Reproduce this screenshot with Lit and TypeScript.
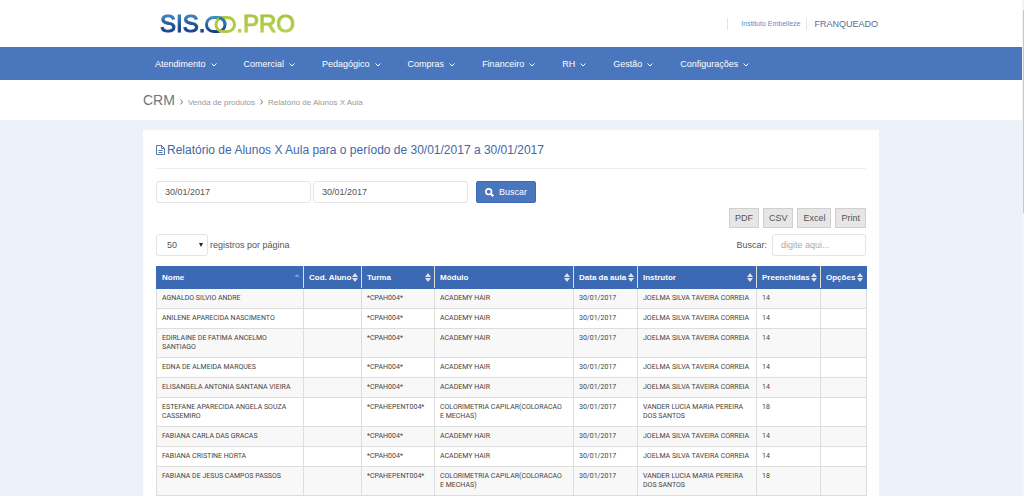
import { LitElement, html, css } from "lit";
import { customElement, property } from "lit/decorators.js";

interface Aula {
  nome: string;
  turma: string;
  modulo: string;
  instrutor: string;
  preenchidas: number;
}

const JOELMA = "JOELMA SILVA TAVEIRA CORREIA";
const VANDER = "VANDER LUCIA MARIA PEREIRA DOS SANTOS";
const COLOR = "COLORIMETRIA CAPILAR(COLORACAO E MECHAS)";

const hair = (nome: string): Aula => ({
  nome,
  turma: "*CPAH004*",
  modulo: "ACADEMY HAIR",
  instrutor: JOELMA,
  preenchidas: 14,
});
const color = (nome: string): Aula => ({
  nome,
  turma: "*CPAHEPENT004*",
  modulo: COLOR,
  instrutor: VANDER,
  preenchidas: 18,
});

const AULAS: Aula[] = [
  hair("AGNALDO SILVIO ANDRE"),
  hair("ANILENE APARECIDA NASCIMENTO"),
  hair("EDIRLAINE DE FATIMA ANCELMO SANTIAGO"),
  hair("EDNA DE ALMEIDA MARQUES"),
  hair("ELISANGELA ANTONIA SANTANA VIEIRA"),
  color("ESTEFANE APARECIDA ANGELA SOUZA CASSEMIRO"),
  hair("FABIANA CARLA DAS GRACAS"),
  hair("FABIANA CRISTINE HORTA"),
  color("FABIANA DE JESUS CAMPOS PASSOS"),
];

const MENU = [
  "Atendimento",
  "Comercial",
  "Pedagógico",
  "Compras",
  "Financeiro",
  "RH",
  "Gestão",
  "Configurações",
];

const COLUNAS = [
  { titulo: "Nome", classe: "c-nome" },
  { titulo: "Cod. Aluno", classe: "c-cod" },
  { titulo: "Turma", classe: "c-turma" },
  { titulo: "Módulo", classe: "c-modulo" },
  { titulo: "Data da aula", classe: "c-data" },
  { titulo: "Instrutor", classe: "c-instrutor" },
  { titulo: "Preenchidas", classe: "c-preench" },
  { titulo: "Opções", classe: "c-opcoes" },
];

@customElement("app-logo")
export class AppLogo extends LitElement {
  static styles = css`
    :host {
      display: flex;
      align-items: center;
      font: 24px/20px "Liberation Sans", Arial, sans-serif;
    }
    .blue {
      color: transparent;
      background: linear-gradient(#3f8fc6, #1d4a90 60%, #173f83);
      background-clip: text;
      -webkit-text-stroke: 1px #1f5fa044;
    }
    .green {
      color: transparent;
      background: linear-gradient(#a3c33c, #bfd455);
      background-clip: text;
      -webkit-text-stroke: 1px #b0c94655;
    }
    svg {
      display: block;
      flex: none;
    }
  `;
  render() {
    return html`
      <span class="blue">SIS.</span>
      <svg width="31" height="20" viewBox="0 0 31 20" fill="none" stroke-width="3" aria-hidden="true">
        <defs>
          <linearGradient id="b" x1="0" y1="0" x2="0" y2="1">
            <stop offset="0" stop-color="#3f8fc6" />
            <stop offset="1" stop-color="#173f83" />
          </linearGradient>
        </defs>
        <rect x="1.5" y="3.5" width="18.500" height="14" rx="7" stroke="url(#b)" />
        <rect x="11" y="3.5" width="18.500" height="14" rx="7" stroke="#b0ca45" />
        <path d="M14 3.700C17.500 4.200 20 7 20 10.500" stroke="#2f74b0" />
      </svg>
      <span class="green">.PRO</span>
    `;
  }
}

@customElement("app-nav")
export class AppNav extends LitElement {
  static styles = css`
    :host {
      display: block;
      padding-top: 2px;
      background: #4a76be;
      font: 9px/31px "Liberation Sans", Arial, sans-serif;
    }
    nav {
      display: flex;
      gap: 27px;
      max-width: 736px;
      margin: 0 auto;
      padding: 0 12px;
      box-sizing: border-box;
    }
    a {
      display: flex;
      align-items: center;
      gap: 5px;
      color: #fff;
      text-decoration: none;
      white-space: nowrap;
    }
  `;
  render() {
    return html`<nav>
      ${MENU.map(
        (m) => html`<a href="#"
          >${m}<svg width="6" height="4" viewBox="0 0 6 4" fill="none" stroke="#fff" aria-hidden="true">
            <path d="M.5.5 3 3 5.500.5" /></svg
        ></a>`
      )}
    </nav>`;
  }
}

@customElement("aulas-table")
export class AulasTable extends LitElement {
  @property({ attribute: false }) rows: Aula[] = [];

  static styles = css`
    :host {
      display: block;
    }
    table {
      width: 100%;
      table-layout: fixed;
      border-collapse: collapse;
      color: #444;
      font: 7px/9px Roboto, "Liberation Sans", sans-serif;
    }
    th,
    td {
      border: 1px solid #ddd;
      padding: 5px 4px 5px 5px;
      text-align: left;
      vertical-align: top;
    }
    td.modulo {
      padding-right: 8px;
    }
    th {
      background: #3b69b3;
      border-top-color: #3b69b3;
      border-bottom-color: #3b69b3;
      color: #fff;
      font: bold 8px/11px "Liberation Sans", Arial, sans-serif;
      white-space: nowrap;
      padding-right: 3px;
    }
    th:first-child {
      border-left-color: #3b69b3;
    }
    th:last-child {
      border-right-color: #3b69b3;
    }
    .head {
      display: flex;
      align-items: center;
      justify-content: space-between;
    }
    .head svg {
      flex: none;
    }
    tbody tr:nth-child(odd) {
      background: #f8f8f8;
    }
    .c-nome {
      width: 147px;
    }
    .c-cod {
      width: 58px;
    }
    .c-turma {
      width: 73px;
    }
    .c-modulo {
      width: 139px;
    }
    .c-data {
      width: 64px;
    }
    .c-instrutor {
      width: 119px;
    }
    .c-preench {
      width: 64px;
    }
    .c-opcoes {
      width: 46px;
    }
  `;

  render() {
    return html`<table>
      <colgroup>
        ${COLUNAS.map((c) => html`<col class=${c.classe} />`)}
      </colgroup>
      <thead>
        <tr>
          ${COLUNAS.map(
            (c, i) => html`<th scope="col">
              <div class="head">
                ${c.titulo}
                ${i === 0
                  ? html`<svg width="6" height="9" viewBox="0 0 6 9" aria-hidden="true">
                      <path d="M3 1 5.500 4H.5z" fill="#7f9fe0" />
                    </svg>`
                  : html`<svg width="6" height="9" viewBox="0 0 6 9" aria-hidden="true">
                      <path d="M3 0 6 4H0zM0 5h6L3 9z" fill="#dbe5f5" />
                    </svg>`}
              </div>
            </th>`
          )}
        </tr>
      </thead>
      <tbody>
        ${this.rows.map(
          (r) => html`<tr>
            <td>${r.nome}</td>
            <td></td>
            <td>${r.turma}</td>
            <td class="modulo">${r.modulo}</td>
            <td>30/01/2017</td>
            <td>${r.instrutor}</td>
            <td>${r.preenchidas}</td>
            <td></td>
          </tr>`
        )}
      </tbody>
    </table>`;
  }
}

@customElement("app-root")
export class AppRoot extends LitElement {
  static styles = css`
    :host {
      display: grid;
      grid-template-columns: minmax(0, 1fr) 2px;
      min-height: 100vh;
      background: #edf1fa;
      color: #555;
      font: 9px/12px "Liberation Sans", Arial, sans-serif;
    }
    * {
      box-sizing: border-box;
    }
    .page {
      display: flex;
      flex-direction: column;
    }
    .rail {
      padding-top: 10px;
      background: #f4f4f6;
    }
    .thumb {
      height: 41vh;
      border-right: 1px solid #c8c8cc;
    }
    .wrap {
      width: 100%;
      max-width: 736px;
      margin: 0 auto;
    }
    .top,
    .crumbs {
      background: #fff;
    }
    .top .wrap {
      display: flex;
      align-items: center;
      justify-content: space-between;
      height: 47px;
      padding: 1px 1px 0 17px;
    }
    .user {
      display: flex;
      align-items: center;
      color: #5b6b8c;
    }
    .user > * {
      border-left: 1px solid #dfe3ea;
    }
    .unit {
      padding: 0 6px 0 13px;
      color: #5b8fbf;
      font-size: 7px;
      text-decoration: none;
    }
    .role {
      padding-left: 7px;
    }
    .crumbs .wrap {
      display: flex;
      align-items: baseline;
      gap: 5px;
      height: 40px;
      padding-top: 11px;
      color: #999;
      font-size: 8px;
    }
    .crumbs h1 {
      margin: 0;
      color: #697882;
      font-size: 14px;
      font-weight: normal;
      line-height: 18px;
    }
    .crumbs a {
      color: inherit;
      text-decoration: none;
    }
    .panel {
      flex: 1;
      margin-top: 10px;
      padding: 0 13px;
      background: #fff;
    }
    h2 {
      display: flex;
      align-items: center;
      gap: 2px;
      height: 39px;
      margin: 0 0 12px;
      padding-top: 2px;
      border-bottom: 1px solid #eee;
      color: #4467a5;
      font-size: 12px;
      font-weight: normal;
    }
    input,
    select {
      height: 22px;
      border: 1px solid #e5e5e5;
      border-radius: 3px;
      background: #fff;
      color: #555;
      font: inherit;
    }
    input {
      width: 155px;
      padding: 0 8px;
    }
    input::placeholder {
      color: #aaa;
      opacity: 1;
    }
    .filter {
      display: flex;
      gap: 2px;
    }
    .go {
      display: flex;
      align-items: center;
      gap: 5px;
      height: 22px;
      margin-left: 6px;
      padding: 0 8px;
      border: 1px solid #3f6cb8;
      border-radius: 2px;
      background: #4a76be;
      color: #fff;
      font: inherit;
    }
    .export {
      display: flex;
      justify-content: flex-end;
      gap: 4px;
      margin: 5px 0 6px;
    }
    .export button {
      height: 20px;
      padding: 0 5px;
      border: 1px solid #d0d0d0;
      border-radius: 0;
      background: #e6e6e6;
      color: #555;
      font: inherit;
    }
    .tools {
      display: flex;
      align-items: center;
      justify-content: space-between;
      margin-bottom: 10px;
    }
    .tools label {
      display: flex;
      align-items: center;
    }
    .length {
      gap: 2px;
    }
    .search {
      gap: 5px;
    }
    .search input {
      width: 94px;
    }
    .select {
      display: grid;
      align-items: center;
    }
    .select > * {
      grid-area: 1 / 1;
    }
    .select svg {
      justify-self: end;
      margin-right: 5px;
      pointer-events: none;
    }
    select {
      width: 52px;
      padding: 0 10px;
      appearance: none;
    }
  `;

  private sep() {
    return html`<svg width="3" height="6" viewBox="0 0 3 6" fill="none" stroke="#777" aria-hidden="true">
      <path d="M.5.5 2.500 3 .5 5.500" />
    </svg>`;
  }

  render() {
    return html`
      <div class="page">
        <header class="top">
          <div class="wrap">
            <app-logo></app-logo>
            <div class="user">
              <a class="unit" href="#">Instituto Embelleze</a>
              <span class="role">FRANQUEADO</span>
            </div>
          </div>
        </header>
        <app-nav></app-nav>
        <div class="crumbs">
          <div class="wrap">
            <h1>CRM</h1>
            ${this.sep()}
            <a href="#">Venda de produtos</a>
            ${this.sep()}
            <a href="#">Relatório de Alunos X Aula</a>
          </div>
        </div>
        <main class="panel wrap">
          <h2>
            <svg width="9" height="10" viewBox="0 0 9 10" fill="none" stroke="#4467a5" aria-hidden="true">
              <path d="M.5.5h5l3 3v6h-8zM5.500.5v3h3M2.500 5.500h4M2.500 7.500h4" stroke-width=".9" />
            </svg>
            Relatório de Alunos X Aula para o período de 30/01/2017 a 30/01/2017
          </h2>
          <form class="filter" @submit=${(e: Event) => e.preventDefault()}>
            <input type="text" aria-label="Data inicial" value="30/01/2017" />
            <input type="text" aria-label="Data final" value="30/01/2017" />
            <button class="go" type="submit">
              <svg width="9" height="9" viewBox="0 0 9 9" fill="none" stroke="#fff" aria-hidden="true">
                <circle cx="3.700" cy="3.700" r="2.800" stroke-width="1.600" />
                <path d="m5.800 5.800 2.500 2.500" stroke-width="2" />
              </svg>
              Buscar
            </button>
          </form>
          <div class="export">
            ${["PDF", "CSV", "Excel", "Print"].map((t) => html`<button type="button">${t}</button>`)}
          </div>
          <div class="tools">
            <label class="length">
              <span class="select">
                <select>
                  <option>10</option>
                  <option>25</option>
                  <option selected>50</option>
                  <option>100</option>
                </select>
                <svg width="4" height="4" viewBox="0 0 4 4" aria-hidden="true">
                  <path d="M0 0h4L2 4z" fill="#222" />
                </svg>
              </span>
              registros por página
            </label>
            <label class="search">Buscar: <input type="search" placeholder="digite aqui..." /></label>
          </div>
          <aulas-table .rows=${AULAS}></aulas-table>
        </main>
      </div>
      <div class="rail"><div class="thumb"></div></div>
    `;
  }
}
